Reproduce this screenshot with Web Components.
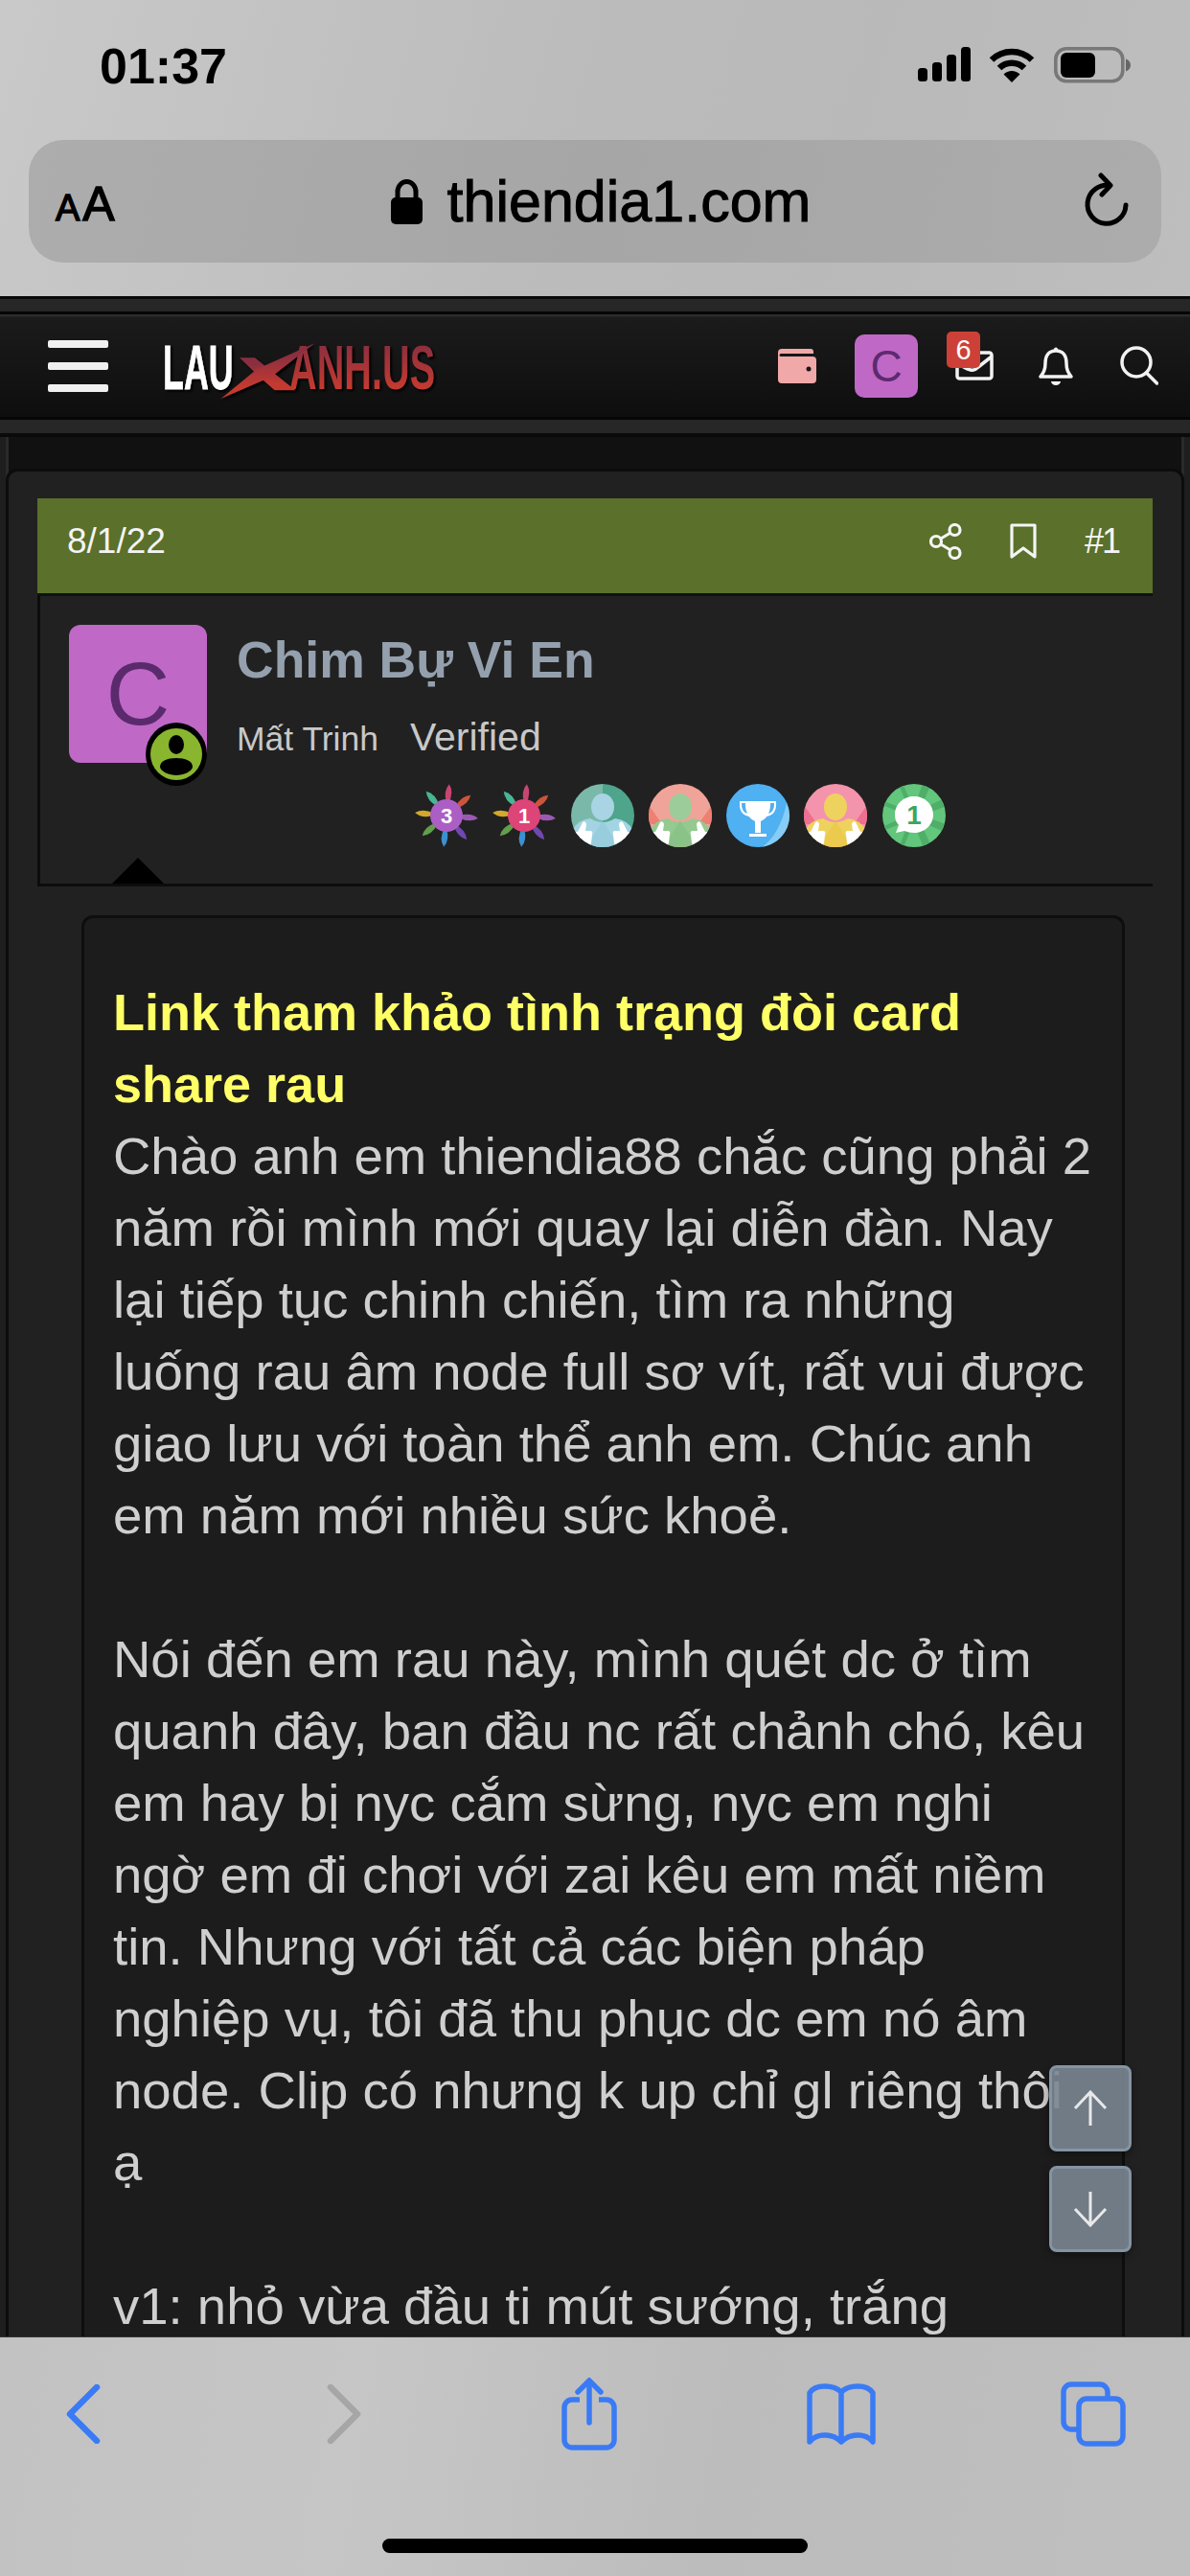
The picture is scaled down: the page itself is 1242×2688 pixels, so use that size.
<!DOCTYPE html>
<html lang="vi">
<head>
<meta charset="utf-8">
<title>thiendia1.com</title>
<style>
    html, body { margin: 0; padding: 0; background: #111; }
    body { font-family: "Liberation Sans", Arimo, Arial, sans-serif; }
</style>
</head>
<body>
<phone-page>
    <safari-top slot="top" host-name="thiendia1.com" time="01:37"></safari-top>
    <site-header slot="header"></site-header>
    <post-card slot="post" date="8/1/22" number="#1" author="Chim Bự Vi En" rank="Mất Trinh" label="Verified">
        <b class="title">Link tham khảo tình trạng đòi card<br>share rau</b><br>
        Chào anh em thiendia88 chắc cũng phải 2<br>
        năm rồi mình mới quay lại diễn đàn. Nay<br>
        lại tiếp tục chinh chiến, tìm ra những<br>
        luống rau âm node full sơ vít, rất vui được<br>
        giao lưu với toàn thể anh em. Chúc anh<br>
        em năm mới nhiều sức khoẻ.<br>
        <br>
        Nói đến em rau này, mình quét dc ở tìm<br>
        quanh đây, ban đầu nc rất chảnh chó, kêu<br>
        em hay bị nyc cắm sừng, nyc em nghi<br>
        ngờ em đi chơi với zai kêu em mất niềm<br>
        tin. Nhưng với tất cả các biện pháp<br>
        nghiệp vụ, tôi đã thu phục dc em nó âm<br>
        node. Clip có nhưng k up chỉ gl riêng thôi<br>
        ạ<br>
        <br>
        v1: nhỏ vừa đầu ti mút sướng, trắng
    </post-card>
    <scroll-buttons slot="float"></scroll-buttons>
    <safari-toolbar slot="bottom"></safari-toolbar>
</phone-page>

<script>
const BASE = `* { box-sizing: border-box; } :host { box-sizing: border-box; } svg { display: block; }`;

class PhonePage extends HTMLElement {
    constructor() {
        super();
        this.attachShadow({mode: 'open'});
        this.shadowRoot.innerHTML = `
            <style>
                ${BASE}
                :host { display: flex; flex-direction: column; width: 1242px; height: 2688px; overflow: hidden; background: #111; }
                .content { flex: 1; min-height: 0; position: relative; overflow: hidden; background: #111; }
            </style>
            <slot name="top"></slot>
            <div class="content">
                <slot name="header"></slot>
                <slot name="post"></slot>
                <slot name="float"></slot>
            </div>
            <slot name="bottom"></slot>
        `;
    }
}

class SafariTop extends HTMLElement {
    constructor() {
        super();
        this.attachShadow({mode: 'open'});
        this.shadowRoot.innerHTML = `
            <style>
                ${BASE}
                :host { display: block; height: 309px; padding: 0 30px; color: #000;
                    background: linear-gradient(105deg, #c9c9c9 0%, #bcbcbc 45%, #b9b9b9 70%, #bebebe 100%); }
                .status { display: flex; align-items: flex-start; height: 146px; padding: 41px 0 0 74px; }
                .time { font-size: 52px; font-weight: 700; line-height: 52px; margin-top: 2px; }
                .right { margin-left: auto; display: flex; padding: 8px 0 0; margin-right: 32px; }
                .wifi { margin: 0 20px 0 19px; }
                .url { display: flex; align-items: center; height: 128px; border-radius: 36px; padding: 0 32px 0 28px;
                    background: linear-gradient(100deg, #adadad, #a6a6a6 50%, #acacac); }
                .aa { width: 66px; display: flex; align-items: baseline; line-height: 1; margin-top: 6px; -webkit-text-stroke: 1.4px #000; }
                .aa span:first-child { font-size: 38px; margin-right: 3px; }
                .aa span:last-child { font-size: 50px; }
                .host { flex: 1; display: flex; justify-content: center; align-items: center; gap: 26px; padding-right: 34px; padding-left: 34px; }
                .name { font-size: 61px; line-height: 70px; -webkit-text-stroke: 1px #000; }
            </style>
            <div class="status">
                <span class="time">${this.getAttribute('time')}</span>
                <div class="right">
                    <svg width="56" height="36" viewBox="0 0 56 36"><rect x="1" y="22" width="10" height="14" rx="3.5"/><rect x="16" y="16" width="10" height="20" rx="3.5"/><rect x="31" y="8" width="10" height="28" rx="3.5"/><rect x="46" y="0" width="10" height="36" rx="3.5"/></svg>
                    <svg class="wifi" width="48" height="37" viewBox="0 0 48 37" fill="none" stroke="#000"><path d="M3 13.5A30 30 0 0 1 45 13.5" stroke-width="6.5"/><path d="M11 22A18.500 18.500 0 0 1 37 22" stroke-width="6.500"/><path d="M24 37L15.500 28.500A12 12 0 0 1 32.500 28.500Z" fill="#000" stroke="none"/></svg>
                    <svg width="80" height="38" viewBox="0 0 80 38"><rect x="1.800" y="1.800" width="70" height="34" rx="11" fill="none" stroke="#787878" stroke-width="3.600"/><rect x="7" y="6" width="36" height="26" rx="6"/><path d="M75 12.500C78 13.500 80 16 80 19S78 24.500 75 25.500Z" fill="#666"/></svg>
                </div>
            </div>
            <div class="url">
                <div class="aa"><span>A</span><span>A</span></div>
                <div class="host">
                    <svg width="33" height="47" viewBox="0 0 33 47"><path d="M7 21V13A9.500 10.500 0 0 1 26 13V21" fill="none" stroke="#000" stroke-width="5"/><rect x="0" y="19" width="33" height="28" rx="5"/></svg>
                    <span class="name">${this.getAttribute('host-name')}</span>
                </div>
                <svg width="50" height="60" viewBox="0 0 50 60" fill="none" stroke="#000" stroke-width="5" stroke-linecap="round" stroke-linejoin="round"><path d="M28 13.500A20 20 0 1 0 45 34"/><path d="M19 3L29 13.500L20 23"/></svg>
            </div>
        `;
    }
}

class SiteHeader extends HTMLElement {
    constructor() {
        super();
        this.attachShadow({mode: 'open'});
        this.shadowRoot.innerHTML = `
            <style>
                ${BASE}
                :host { display: block; height: 147px; background: #272727; border-top: 3px solid #0a0a0a; border-bottom: 4px solid #0a0a0a; padding-top: 13px; }
                .bar { display: flex; align-items: center; height: 113px; padding: 0 33px 0 50px; border-top: 3px solid #060606; border-bottom: 3px solid #060606;
                    background: linear-gradient(#2b2b2b 0, #2b2b2b 2px, #1b1b1b 3px, #0e0e0e 100%); }
                .burger { display: flex; flex-direction: column; gap: 15px; width: 63px; }
                .burger i { display: block; height: 8px; border-radius: 2px; background: #f0f0f0; }
                .logo { position: relative; display: flex; width: 285px; height: 60px; margin-left: 57px; margin-top: 4px;
                    font: 700 64px/60px "Liberation Sans", Arial, sans-serif; -webkit-text-stroke: .8px currentColor; filter: drop-shadow(2px 2px 1px #000); }
                .logo span { display: block; transform-origin: 0 50%; white-space: nowrap; }
                .lau { color: #fff; width: 138px; transform: scaleX(.56); }
                .anh { transform: scaleX(.62); -webkit-text-stroke: 0; background: linear-gradient(#8b2e3f 8%, #c43a30 85%); -webkit-background-clip: text; background-clip: text; color: transparent; }
                .logo svg { position: absolute; left: -30px; top: -24px; }
                .wallet { margin-left: auto; }
                .avatar { width: 66px; height: 66px; margin-left: 40px; border-radius: 10px; background: #bf68c6; color: #5d2a6e;
                    display: flex; align-items: center; justify-content: center; font-size: 46px; line-height: 1; }
                .mail { position: relative; width: 48px; height: 30px; margin: 0 0 0 30px; }
                .mail svg { position: absolute; left: 9px; top: -1px; }
                .count { position: absolute; left: 0; top: -21px; width: 35px; height: 38px; border-radius: 5px; background: #cc4038; color: #fff;
                    font-size: 29px; line-height: 38px; text-align: center; }
                .bell { margin-left: 48px; }
                .search { margin-left: 49px; }
            </style>
            <div class="bar">
                <div class="burger"><i></i><i></i><i></i></div>
                <div class="logo">
                    <span class="lau">LAU</span>
                    <span class="anh">ANH.US</span>
                    <svg width="340" height="110" viewBox="0 0 1020 330">
                        <defs><linearGradient id="x" x1="0" y1="0" x2="0" y2="1"><stop offset=".2" stop-color="#8a2e40"/><stop offset=".8" stop-color="#c53a30"/></linearGradient></defs>
                        <path d="M330 130H378L505 232H440L392 190L330 130Z" fill="url(#x)"/>
                        <path d="M272 258L385 165L565 85L430 190Z" fill="url(#x)"/>
                    </svg>
                </div>
                <svg class="wallet" width="40" height="36" viewBox="0 0 40 36"><path d="M4 0H34A3 3 0 0 1 37 3V5H3A1 1 0 0 0 3 8H36A4 4 0 0 1 40 12V32A4 4 0 0 1 36 36H4A4 4 0 0 1 0 32V4A4 4 0 0 1 4 0Z" fill="#f0a8a8"/><circle cx="32" cy="21" r="2.500" fill="#17141a"/></svg>
                <div class="avatar">C</div>
                <div class="mail">
                    <svg width="40" height="31" viewBox="0 0 40 31" fill="none" stroke="#f2f2f2" stroke-width="3.500" stroke-linejoin="round"><rect x="2" y="2" width="36" height="27" rx="2.500"/><path d="M2 12Q10 19 16 20Q20 21 24 17L38 6"/></svg>
                    <div class="count">6</div>
                </div>
                <svg class="bell" width="36" height="40" viewBox="0 0 36 40" fill="none" stroke="#f2f2f2" stroke-width="3.500" stroke-linejoin="round"><path d="M18 4C10 4 7 10 7 17C7 24 5 27 2 31H34C31 27 29 24 29 17C29 10 26 4 18 4Z"/><circle cx="18" cy="2.500" r="1" fill="#f2f2f2" stroke-width="2"/><path d="M13 36H23A5 4 0 0 1 13 36Z" fill="#f2f2f2" stroke="none"/></svg>
                <svg class="search" width="40" height="41" viewBox="0 0 40 41" fill="none" stroke="#f2f2f2" stroke-width="3.500" stroke-linecap="round"><circle cx="17" cy="17" r="15"/><path d="M27.500 28L38.500 39"/></svg>
            </div>
        `;
    }
}

class TrophyBadge extends HTMLElement {
    constructor() {
        super();
        this.attachShadow({mode: 'open'});
        const kind = this.getAttribute('kind');
        let art = '';
        if (kind === 'flower') art = this.flower(this.getAttribute('num'), this.getAttribute('tone'));
        if (kind === 'teal') art = this.person('#7ab9a9', '#4fa48c', '#a8d4e4', '#a3d4e4', '#8cc6d8');
        if (kind === 'salmon') art = this.person('#f0a398', '#f0a398', '#9ccc9a', '#94c990', '#7fbc7c', '#ee7f72');
        if (kind === 'pink') art = this.person('#f394ac', '#f394ac', '#eed25e', '#eed25e', '#e8c13a', '#ee6f90');
        if (kind === 'cup') art = this.cup();
        if (kind === 'chat') art = this.chat();
        this.shadowRoot.innerHTML = `
            <style>${BASE} :host { display: block; width: 66px; height: 66px; }</style>
            <svg width="66" height="66" viewBox="0 0 66 66">${art}</svg>
        `;
    }

    flower(num, tone) {
        const colors = ['#d84a7c', '#e05a3e', '#a95fc4', '#7a4cc2', '#3f9ce2', '#6aac52', '#e8b72e', '#4cc6a2'];
        const petals = colors.map((c, i) =>
            `<path d="M33 0Q39 8 34 20H32Q27 8 33 0Z" fill="${c}" opacity=".9" transform="rotate(${i * 45 + 5} 33 33)"/>`).join('');
        return `${petals}<circle cx="33" cy="33" r="17" fill="${tone}"/>
            <text x="33" y="41" text-anchor="middle" font-family="Liberation Sans, Arial, sans-serif" font-weight="700" font-size="22" fill="#fff">${num}</text>`;
    }

    thumb(x, flip) {
        const t = flip ? `translate(${x} 0) scale(-1 1)` : `translate(${x} 0)`;
        return `<path transform="${t}" d="M0 50H6L11 40Q14 38 15 42L14 49H20Q22 50 21 53L20 62Q19 64 16 64H0Z" fill="#fff"/>`;
    }

    person(left, right, head, body, low, side) {
        return `<clipPath id="c"><circle cx="33" cy="33" r="33"/></clipPath>
            <g clip-path="url(#c)">
                <rect width="33" height="66" fill="${left}"/><rect x="33" width="33" height="66" fill="${right}"/>
                ${side ? `<path d="M0 22L14 42H0ZM66 22L52 42H66Z" fill="${side}"/>` : ''}
                <ellipse cx="33" cy="24" rx="12" ry="14" fill="${head}"/>
                <path d="M2 66V48Q6 38 20 36Q33 44 46 36Q60 38 64 48V66Z" fill="${body}"/>
                <path d="M16 66L33 38L50 66Z" fill="${low}" opacity=".45"/>
                ${this.thumb(1, false)}${this.thumb(65, true)}
            </g>`;
    }

    cup() {
        return `<circle cx="33" cy="33" r="33" fill="#4fb0f2"/>
            <path d="M66 33A33 33 0 0 1 38 65.500Q56 52 63 20Q66 26 66 33Z" fill="#86ccf5"/>
            <path d="M20 18H46Q47 34 36 39V51H30V39Q19 34 20 18Z" fill="#fff"/>
            <path d="M20 19H15Q14 31 24 33M46 19H51Q52 31 42 33" fill="none" stroke="#fff" stroke-width="2"/>
            <rect x="24" y="52" width="18" height="3" fill="#fff"/>`;
    }

    chat() {
        const rays = [0, 45, 90, 135].map(a =>
            `<path d="M29 0H37L35 66H31Z" fill="#4fae68" transform="rotate(${a + 22} 33 33)"/>`).join('');
        return `<clipPath id="c"><circle cx="33" cy="33" r="33"/></clipPath>
            <g clip-path="url(#c)"><rect width="66" height="66" fill="#62c67c"/>${rays}</g>
            <path d="M33 13C44 13 53 21 53 32C53 43 44 51 33 51C29 51 26 50 23 49L14 51L17 43C14 40 13 36 13 32C13 21 22 13 33 13Z" fill="#fff"/>
            <text x="33" y="42" text-anchor="middle" font-family="Liberation Sans, Arial, sans-serif" font-weight="700" font-size="28" fill="#3ba65e">1</text>`;
    }
}

class PostCard extends HTMLElement {
    constructor() {
        super();
        this.attachShadow({mode: 'open'});
        this.shadowRoot.innerHTML = `
            <style>
                ${BASE}
                :host { display: block; padding: 33px 6px 0;
                    background: linear-gradient(90deg, #1e1e1e 6px, #2a2a2a 6px, #2a2a2a 9px, #111 9px, #111 1233px, #2a2a2a 1233px, #2a2a2a 1236px, #1e1e1e 1236px); }
                .card { background: #212121; border: 3px solid #0c0c0c; border-bottom: 0; border-radius: 12px 12px 0 0; padding: 28px 30px 0; height: 2000px; }
                .head { display: flex; align-items: center; height: 102px; padding: 0 35px 10px 31px; background: #5a702b; border-bottom: 3px solid #111;
                    color: #f4f4f4; font-size: 37px; }
                .head .tools { margin-left: auto; display: flex; align-items: center; }
                .head svg:first-child { margin-right: 50px; }
                .head span.no { margin-left: 50px; font-size: 36px; letter-spacing: -2px; }
                .user { position: relative; display: flex; height: 303px; padding: 30px 0 0 30px; border-left: 3px solid #0c0c0c; border-bottom: 3px solid #0c0c0c; }
                .pic { position: relative; width: 144px; height: 144px; border-radius: 12px; background: #bf68c6; color: #5a2a6c;
                    display: flex; align-items: center; justify-content: center; font-size: 92px; line-height: 1; }
                .dot { position: absolute; left: 80px; top: 102px; width: 64px; height: 66px; border-radius: 50%; background: #000; display: flex; align-items: center; justify-content: center; }
                .info { margin-left: 31px; }
                .name { font-size: 53.5px; line-height: 62px; font-weight: 700; color: #94a0ae; margin-top: 6px; }
                .sub { display: flex; align-items: baseline; color: #c8c8c8; margin-top: 26px; line-height: 46px; }
                .rank { font-size: 35.5px; }
                .label { font-size: 41px; margin-left: 33px; }
                .strip { display: flex; gap: 15.3px; margin: 24px 0 0 186px; }
                .tip { position: absolute; left: 75px; bottom: 0; width: 0; height: 0; border: solid transparent; border-width: 0 27px 27px; border-bottom-color: #000; }
                .msg { margin: 30px 29px 0 46px; padding: 61px 30px 0; height: 1700px; background: #1c1c1c; border: 3px solid #0e0e0e; border-bottom: 0; border-radius: 12px 12px 0 0;
                    color: #cfcfcf; font-size: 54.5px; line-height: 75px; white-space: nowrap; }
                ::slotted(b) { color: #ffff66; font-size: 54px; }
            </style>
            <div class="card">
                <div class="head">
                    <span>${this.getAttribute('date')}</span>
                    <div class="tools">
                        <svg width="34" height="38" viewBox="0 0 34 38" fill="none" stroke="#f4f4f4" stroke-width="3.200"><circle cx="26.500" cy="7" r="5.500"/><circle cx="7" cy="19" r="5.500"/><circle cx="26.500" cy="31" r="5.500"/><path d="M12 16L22 10M12 22L22 28"/></svg>
                        <svg width="28" height="37" viewBox="0 0 28 37" fill="none" stroke="#f4f4f4" stroke-width="3.200" stroke-linejoin="round"><path d="M2 2H26V35L14 26L2 35Z"/></svg>
                        <span class="no">${this.getAttribute('number')}</span>
                    </div>
                </div>
                <div class="user">
                    <div class="pic">C
                        <div class="dot"><svg width="54" height="54" viewBox="0 0 54 54"><circle cx="27" cy="27" r="27" fill="#8ab52e"/><ellipse cx="27" cy="17" rx="8" ry="10" fill="#000"/><path d="M10 40C10 34 18 31 27 31S44 34 44 40C44 45 34 49 27 49S10 45 10 40Z" fill="#000"/></svg></div>
                    </div>
                    <div class="info">
                        <div class="name">${this.getAttribute('author')}</div>
                        <div class="sub"><span class="rank">${this.getAttribute('rank')}</span><span class="label">${this.getAttribute('label')}</span></div>
                        <div class="strip">
                            <trophy-badge kind="flower" num="3" tone="#ab5fc4"></trophy-badge>
                            <trophy-badge kind="flower" num="1" tone="#dd4477"></trophy-badge>
                            <trophy-badge kind="teal"></trophy-badge>
                            <trophy-badge kind="salmon"></trophy-badge>
                            <trophy-badge kind="cup"></trophy-badge>
                            <trophy-badge kind="pink"></trophy-badge>
                            <trophy-badge kind="chat"></trophy-badge>
                        </div>
                    </div>
                    <div class="tip"></div>
                </div>
                <div class="msg"><slot></slot></div>
            </div>
        `;
    }
}

class ScrollButtons extends HTMLElement {
    constructor() {
        super();
        this.attachShadow({mode: 'open'});
        const arrow = d => `<svg width="36" height="38" viewBox="0 0 36 38" fill="none" stroke="#e8e8e8" stroke-width="3"><path d="${d}"/></svg>`;
        this.shadowRoot.innerHTML = `
            <style>
                ${BASE}
                :host { position: absolute; right: 61px; bottom: 88px; display: flex; flex-direction: column; gap: 15px; }
                .btn { width: 86px; height: 90px; border-radius: 8px; border: 3px solid #8494a3; background: rgba(122,134,146,.9);
                    box-shadow: 0 3px 8px rgba(0,0,0,.4); display: flex; align-items: center; justify-content: center; }
            </style>
            <div class="btn">${arrow('M18 37V2M2 19L18 2L34 19')}</div>
            <div class="btn">${arrow('M18 1V36M2 19L18 36L34 19')}</div>
        `;
    }
}

class SafariToolbar extends HTMLElement {
    constructor() {
        super();
        this.attachShadow({mode: 'open'});
        this.shadowRoot.innerHTML = `
            <style>
                ${BASE}
                :host { display: block; height: 250px; padding-top: 42px; border-top: 1px solid #333;
                    background: linear-gradient(100deg, #c2c2c2, #c6c6c6 30%, #bcbcbc 60%, #bfbfbf); }
                .row { display: flex; align-items: center; height: 76px; padding-left: 66px; }
                .fwd { margin-left: 230px; }
                .share { margin-left: 205px; }
                .book { margin-left: 195px; }
                .tabs { margin-left: 189px; }
                .home { width: 444px; height: 15px; border-radius: 8px; background: #000; margin: 92px auto 0 399px; }
            </style>
            <div class="row">
                <svg width="42" height="62" viewBox="0 0 42 62" fill="none" stroke="#3a7bf5" stroke-width="6.500" stroke-linecap="round" stroke-linejoin="round"><path d="M35 3L7 31L35 59"/></svg>
                <svg class="fwd" width="42" height="62" viewBox="0 0 42 62" fill="none" stroke="#a6a6a6" stroke-width="6.500" stroke-linecap="round" stroke-linejoin="round"><path d="M7 3L35 31L7 59"/></svg>
                <svg class="share" width="60" height="76" viewBox="0 0 60 76" fill="none" stroke="#3a7bf5" stroke-width="5.500" stroke-linecap="round"><path d="M20 23H12A8 8 0 0 0 4 31V65A8 8 0 0 0 12 73H48A8 8 0 0 0 56 65V31A8 8 0 0 0 48 23H40" stroke-linecap="butt"/><path d="M30 47V4M18 15L30 3L42 15"/></svg>
                <svg class="book" width="76" height="66" viewBox="0 0 76 66" fill="none" stroke="#3a7bf5" stroke-width="5.500" stroke-linecap="round" stroke-linejoin="round"><path d="M38 10C33 5 27 4 21 4C14 4 8 6 5 11V62C9 57 14 55 21 55C27 55 33 57 38 62C43 57 49 55 55 55C62 55 67 57 71 62V11C68 6 62 4 55 4C49 4 43 5 38 10V62"/></svg>
                <svg class="tabs" width="72" height="72" viewBox="0 0 72 72" fill="none" stroke="#3a7bf5" stroke-width="5.500"><path d="M21 52H13A8 8 0 0 1 5 44V13A8 8 0 0 1 13 5H43A8 8 0 0 1 51 13V20"/><rect x="21" y="20" width="46" height="47" rx="8"/></svg>
            </div>
            <div class="home"></div>
        `;
    }
}

customElements.define('phone-page', PhonePage);
customElements.define('safari-top', SafariTop);
customElements.define('site-header', SiteHeader);
customElements.define('trophy-badge', TrophyBadge);
customElements.define('post-card', PostCard);
customElements.define('scroll-buttons', ScrollButtons);
customElements.define('safari-toolbar', SafariToolbar);
</script>
</body>
</html>
